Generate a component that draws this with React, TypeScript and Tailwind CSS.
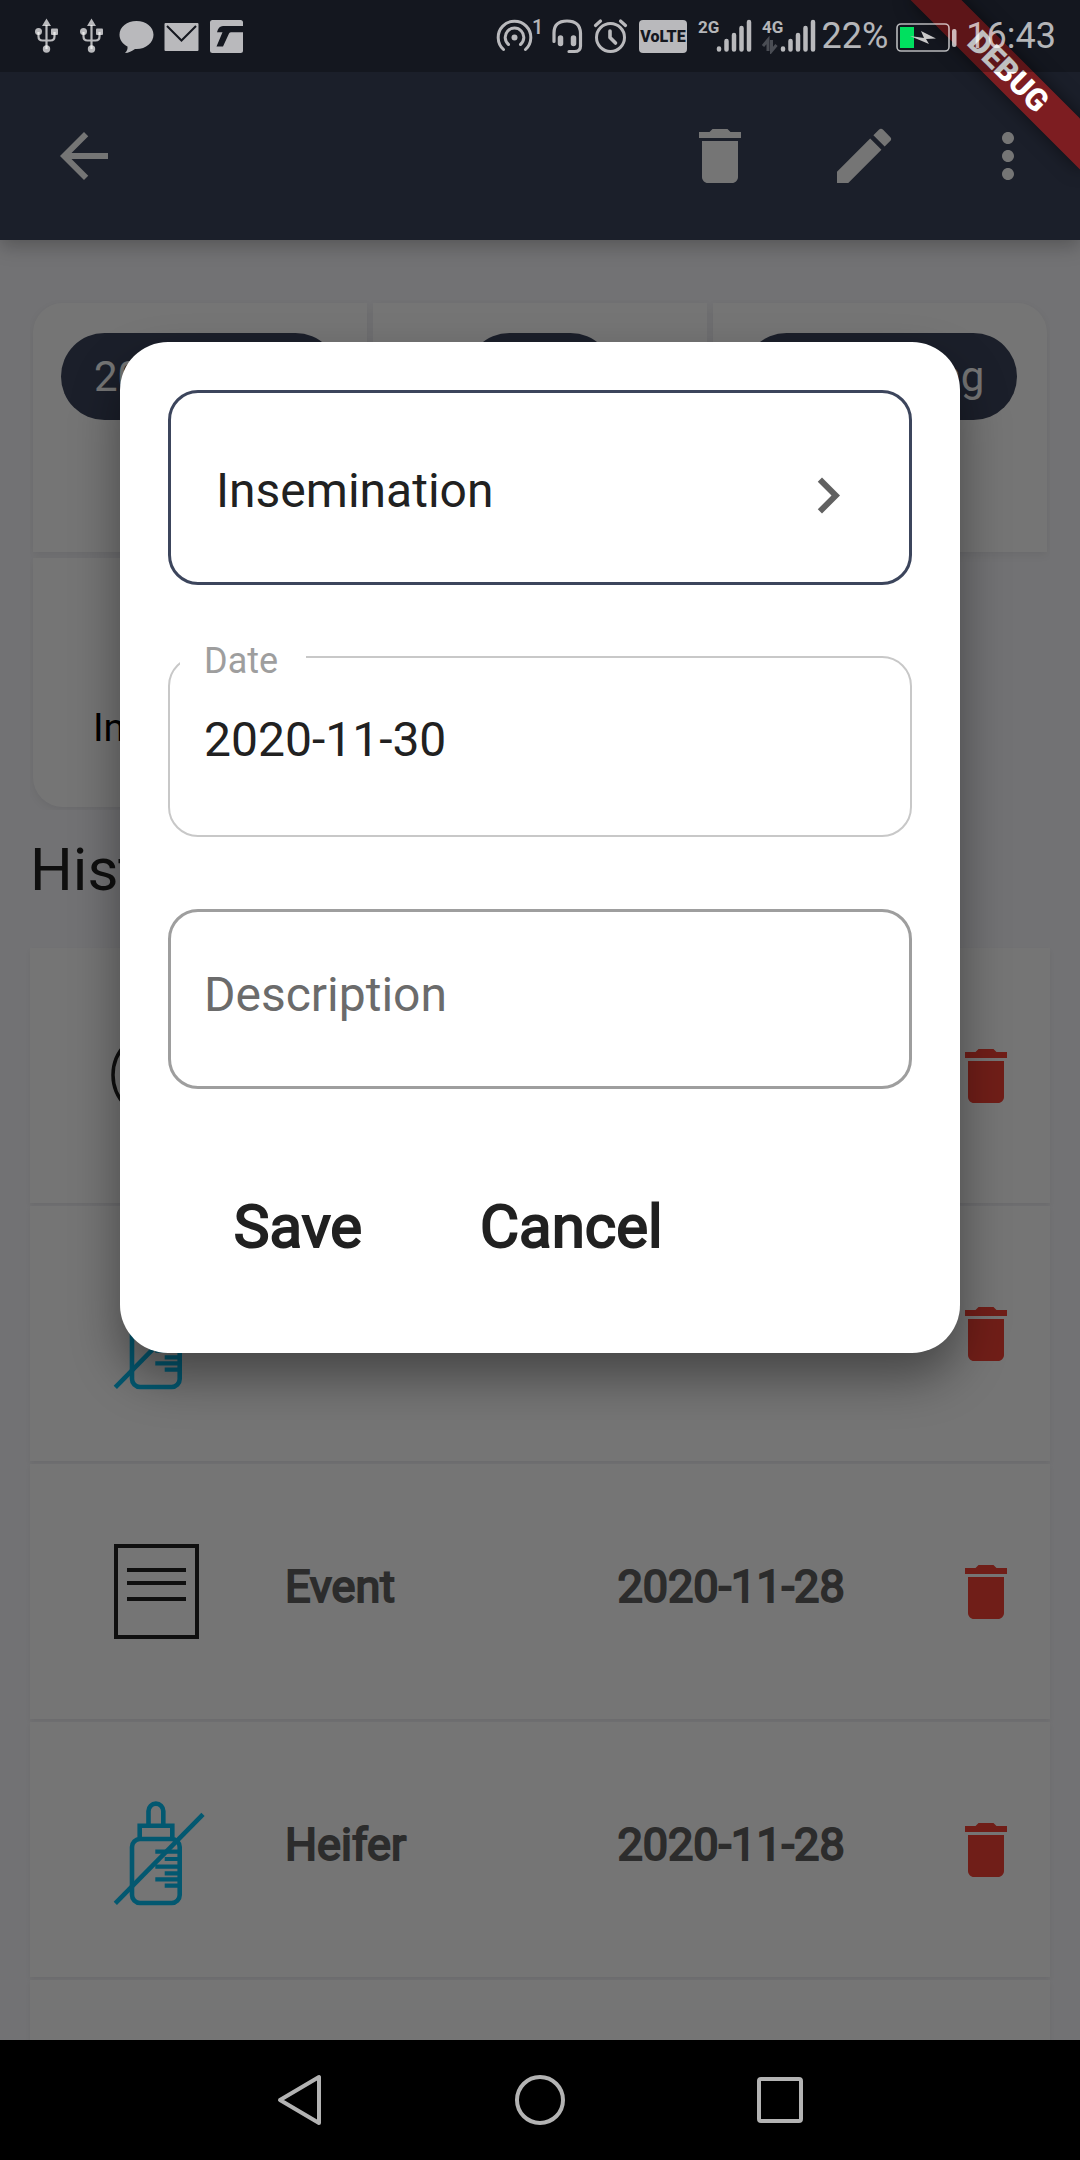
import type { ReactNode } from "react";
import {
  MdArrowBack,
  MdChevronRight,
  MdDelete,
  MdEdit,
  MdMoreVert,
} from "react-icons/md";

/* ---------- Status bar icons ---------- */

function UsbIcon() {
  return (
    <svg width="45" height="36" viewBox="0 0 45 36" fill="none" stroke="currentColor" strokeWidth="2.2">
      <path d="M22.5 7v24M14.5 14v4.500q0 4 4 4h8q4 0 4-4V14" />
      <path d="M22.500 0.500l4.500 7.500h-9z" fill="currentColor" stroke="none" />
      <circle cx="14.500" cy="13.500" r="3.500" fill="currentColor" stroke="none" />
      <rect x="27" y="10.500" width="7" height="6.500" rx="1" fill="currentColor" stroke="none" />
      <circle cx="22.500" cy="31" r="3.700" fill="currentColor" stroke="none" />
    </svg>
  );
}

function ChatIcon() {
  return (
    <svg width="45" height="36" viewBox="0 0 45 36" fill="currentColor">
      <path d="M22.500 3C32 3 39.500 9 39.500 16.700S32 31 22.500 31l-1.500 0C18 33 14.500 35 11 35c2-2 2.800-4 2.500-6.500C8.500 26 5.500 21.500 5.500 16.700 5.500 9 13 3 22.500 3z" />
    </svg>
  );
}

function MailIcon() {
  return (
    <svg width="45" height="36" viewBox="0 0 45 36">
      <rect x="5.500" y="5" width="34" height="28" rx="1" fill="currentColor" />
      <path d="M8 8l14.500 14.500L37 8" fill="none" stroke="#14171f" strokeWidth="2" />
    </svg>
  );
}

function TruecallerIcon() {
  return (
    <svg width="45" height="36" viewBox="0 0 45 36">
      <rect x="6" y="2" width="33" height="33" rx="2.500" fill="currentColor" />
      <path d="M39 8H19q-4.500 0-6 6.200h5.500L12.500 28.500h6.500L25 15.500q.7-1.300 2.200-1.300H39z" fill="#14171f" />
    </svg>
  );
}

function HotspotIcon() {
  return (
    <svg width="48" height="36" viewBox="0 0 48 36" fill="none" stroke="currentColor" strokeWidth="3" strokeLinecap="round">
      <path d="M7.500 31.500A16.300 16.300 0 1 1 29.500 31.500" />
      <path d="M12.500 26.500A9.300 9.300 0 1 1 24.500 26.500" />
      <circle cx="18.500" cy="19.500" r="3" fill="currentColor" stroke="none" />
      <text x="36" y="16" fontSize="20" fontWeight="500" fill="currentColor" stroke="none">1</text>
    </svg>
  );
}

function HeadsetIcon() {
  return (
    <svg width="36" height="36" viewBox="0 0 36 36" fill="none" stroke="currentColor" strokeLinecap="round">
      <path d="M4 23.500V15Q4 3 17 3T30.500 15v13q0 5.500-6 5.500H19" strokeWidth="3.200" />
      <path d="M10.500 20v5.500M23.500 20v5.500" strokeWidth="5.500" />
    </svg>
  );
}

function AlarmIcon() {
  return (
    <svg width="36" height="36" viewBox="0 0 36 36" fill="none" stroke="currentColor" strokeLinecap="round">
      <circle cx="18.500" cy="19.500" r="14" strokeWidth="3" />
      <path d="M3.500 7.500l5-4.500M33.500 7.500l-5-4.500" strokeWidth="3.200" />
      <path d="M18 13v6.500l5.500 5.500" strokeWidth="3.600" strokeLinejoin="round" />
    </svg>
  );
}

function VolteIcon() {
  return (
    <svg width="58" height="36" viewBox="0 0 58 36">
      <rect x="5" y="2" width="48" height="33" rx="4" fill="currentColor" />
      <text x="29" y="24" fontSize="16" fontWeight="900" textAnchor="middle" fill="#14171f">VoLTE</text>
    </svg>
  );
}

function SignalIcon({ label, data = false }: { label: string; data?: boolean }) {
  return (
    <svg width="54" height="36" viewBox="0 0 54 36">
      <text x="0" y="15" fontSize="17" fontWeight="700" fill="currentColor">{label}</text>
      <g stroke="currentColor" strokeWidth="4.500" strokeLinecap="round">
        <path d="M21 30.500v1M28.500 23v8.500M36 17v14.500M43.500 10v21.500M51 4v27.500" />
      </g>
      {data && (
        <path d="M1 28l5-6v11M9.500 22v11l5-6" fill="none" stroke="#4a4d54" strokeWidth="3" />
      )}
    </svg>
  );
}

function BatteryIcon() {
  return (
    <svg width="66" height="36" viewBox="0 0 66 36">
      <rect x="3" y="6" width="52" height="27" rx="4" fill="none" stroke="currentColor" strokeWidth="1.600" />
      <rect x="58" y="11" width="4.500" height="18" rx="2" fill="currentColor" />
      <rect x="6" y="9" width="14" height="21" fill="#00e05f" />
      <path d="M16 18l14 2-3-7 15 7.500-10 .5 3 5z" fill="#c8c8c8" />
    </svg>
  );
}

/* ---------- History icons ---------- */

function InseminationIcon() {
  return (
    <svg width="96" height="111" viewBox="0 0 96 111" fill="none" stroke="#212121" strokeWidth="3.500">
      <circle cx="45" cy="55" r="43" />
    </svg>
  );
}

function EventIcon() {
  return (
    <svg width="96" height="111" viewBox="0 0 96 111" fill="none" stroke="#212121" strokeWidth="4">
      <path d="M5 10h81v91H5zM16 34h59M16 47h59M16 63h59" />
    </svg>
  );
}

function HeiferIcon() {
  return (
    <svg width="96" height="111" viewBox="0 0 96 111" className="overflow-visible" fill="none" stroke="#08bff5" strokeWidth="4.600">
      <path d="M37.500 31V17a7.400 7.400 0 0 1 14.800 0v14" />
      <path d="M28.700 45V31.700h32.600V45" />
      <rect x="21" y="45" width="47.700" height="64" rx="8" />
      <path d="M44.300 57.700h24.400M53.700 65h15M44.300 72.700h24.400M53.700 79.300h15M44.300 85.300h24.400M53.700 91.700h15" strokeWidth="4.200" />
      <path d="M4.300 109.300L92 20.300" />
    </svg>
  );
}

/* ---------- Screen parts ---------- */

function StatusBar() {
  return (
    <div className="absolute inset-x-0 top-0 flex h-18 items-center justify-between bg-black/25 px-6 text-white/70">
      <div className="flex">
        <UsbIcon />
        <UsbIcon />
        <ChatIcon />
        <MailIcon />
        <TruecallerIcon />
      </div>
      <div className="flex items-center gap-1.5 text-[36px] leading-9">
        <HotspotIcon />
        <HeadsetIcon />
        <AlarmIcon />
        <VolteIcon />
        <div className="flex gap-2.5">
          <SignalIcon label="2G" />
          <SignalIcon label="4G" data />
        </div>
        <span>22%</span>
        <BatteryIcon />
        <time>16:43</time>
      </div>
    </div>
  );
}

function IconButton({ label, children }: { label: string; children: ReactNode }) {
  return (
    <button type="button" aria-label={label} className="text-[72px]">
      {children}
    </button>
  );
}

function AppBar() {
  return (
    <header className="relative flex h-60 shrink-0 items-center justify-between bg-[#3c455c] pt-18 pr-9 pl-12 text-white shadow-[0_6px_18px_rgba(0,0,0,0.25)]">
      <IconButton label="Back">
        <MdArrowBack />
      </IconButton>
      <div className="flex gap-18">
        <IconButton label="Delete animal">
          <MdDelete />
        </IconButton>
        <IconButton label="Edit animal">
          <MdEdit />
        </IconButton>
        <IconButton label="More options">
          <MdMoreVert />
        </IconButton>
      </div>
    </header>
  );
}

const cardShadow = "bg-white shadow-[0_3px_9px_rgba(0,0,0,0.07)]";

function Pill({ children }: { children: ReactNode }) {
  return (
    <span className="flex h-[87px] items-center rounded-full bg-[#3c455c] px-[33px] text-[42px] whitespace-nowrap text-white">
      {children}
    </span>
  );
}

function Summary() {
  return (
    <section className="grid auto-rows-[249px] grid-cols-3 gap-[6px] overflow-hidden p-[3px]">
      <div className={`flex items-start justify-center rounded-tl-[30px] pt-[30px] ${cardShadow}`}>
        <Pill>2020-11-28</Pill>
      </div>
      <div className={`flex items-start justify-center pt-[30px] ${cardShadow}`}>
        <Pill>Cow</Pill>
      </div>
      <div className={`flex items-start justify-center rounded-tr-[30px] pt-[30px] ${cardShadow}`}>
        <Pill>Processing</Pill>
      </div>
      <div className={`flex items-end rounded-bl-[30px] pb-[49px] pl-[60px] ${cardShadow}`}>
        <span className="text-[39px] leading-[60px] text-black">Insemination</span>
      </div>
    </section>
  );
}

const history = [
  { name: "Insemination", date: "2020-11-30", icon: <InseminationIcon /> },
  { name: "Heifer", date: "2020-11-28", icon: <HeiferIcon /> },
  { name: "Event", date: "2020-11-28", icon: <EventIcon /> },
  { name: "Heifer", date: "2020-11-28", icon: <HeiferIcon /> },
  { name: "", date: "", icon: null },
];

function History() {
  return (
    <section>
      <h2 className="mt-6 text-[60px] leading-[72px] text-[#212121]">History</h2>
      <ul className="mt-[42px] flex flex-col gap-[3px]">
        {history.map((item, i) => (
          <li
            key={i}
            className="flex h-[255px] items-center bg-white pr-7 text-[45px] text-[#616161] shadow-[0_3px_5px_rgba(0,0,0,0.06)]"
          >
            <div className="w-[255px] pl-[81px]">{item.icon}</div>
            <span className="flex-1 pb-2.5 [-webkit-text-stroke:2px]">{item.name}</span>
            <span className="flex-1 pb-2.5 [-webkit-text-stroke:2px]">{item.date}</span>
            <button type="button" aria-label="Delete entry" className="text-[72px] text-[#f44336]">
              <MdDelete />
            </button>
          </li>
        ))}
      </ul>
    </section>
  );
}

function EventDialog() {
  return (
    <form
      role="dialog"
      aria-label="Edit event"
      className="flex w-full flex-col rounded-[48px] bg-white p-12 text-[48px] text-[#212121] shadow-[0_24px_48px_rgba(0,0,0,0.4)]"
    >
      <div className="relative">
        <select
          aria-label="Event type"
          defaultValue="Insemination"
          className="h-[195px] w-full appearance-none rounded-[30px] border-3 border-[#3c455c] bg-white pt-1.5 pl-[45px]"
        >
          <option>Insemination</option>
        </select>
        <MdChevronRight className="pointer-events-none absolute inset-y-0 right-12 mt-2 h-full text-[72px] text-[#616161]" />
      </div>

      <fieldset className="mt-[47px] h-[205px] rounded-[30px] border-2 border-[#c8c8c8]">
        <legend className="ml-[10px] pt-2 pr-7 pl-6 text-[36px] leading-[42px] text-[#9e9e9e]">
          <label htmlFor="date">Date</label>
        </legend>
        <input
          id="date"
          defaultValue="2020-11-30"
          className="mt-7 w-full bg-transparent px-[34px] leading-[60px] outline-none"
        />
      </fieldset>

      <input
        aria-label="Description"
        placeholder="Description"
        className="mt-18 h-[180px] w-full rounded-[30px] border-3 border-[#9e9e9e] px-[33px] pb-2.5 outline-none placeholder:text-[#6b6b6b]"
      />

      <div className="mt-15 flex h-[156px] items-center gap-1 text-[60px]">
        <button type="button" className="min-w-[260px] px-12 [-webkit-text-stroke:2px]">
          Save
        </button>
        <button type="button" className="min-w-[260px] px-12 [-webkit-text-stroke:2px]">
          Cancel
        </button>
      </div>
    </form>
  );
}

function DebugBanner() {
  return (
    <div className="pointer-events-none absolute top-0 right-0 flex size-36 items-center justify-center">
      <div className="w-60 shrink-0 rotate-45 bg-[#b71c1ca0] text-center text-[31px] leading-9 font-black text-white shadow-[0_0_18px_rgba(0,0,0,0.5)]">
        DEBUG
      </div>
    </div>
  );
}

function NavigationBar() {
  return (
    <nav className="flex h-30 shrink-0 justify-center bg-black text-[#b3b3b3]">
      <button type="button" aria-label="Back" className="flex w-60 items-center justify-center">
        <svg width="48" height="54" viewBox="0 0 48 54" fill="none" stroke="currentColor" strokeWidth="4" strokeLinejoin="round">
          <path d="M43 4v46L4 27z" />
        </svg>
      </button>
      <button type="button" aria-label="Home" className="flex w-60 items-center justify-center">
        <svg width="54" height="54" viewBox="0 0 54 54" fill="none" stroke="currentColor" strokeWidth="4">
          <circle cx="27" cy="27" r="23" />
        </svg>
      </button>
      <button type="button" aria-label="Recent apps" className="flex w-60 items-center justify-center">
        <svg width="54" height="54" viewBox="0 0 54 54" fill="none" stroke="currentColor" strokeWidth="4">
          <rect x="6" y="6" width="42" height="42" rx="2" />
        </svg>
      </button>
    </nav>
  );
}

export default function App() {
  return (
    <div className="flex h-screen flex-col overflow-hidden font-['Roboto',sans-serif]">
      <div className="relative flex min-h-0 flex-1 flex-col overflow-hidden bg-[#f8f8fc]">
        <AppBar />
        <main className="px-[30px] pt-15">
          <Summary />
          <History />
        </main>
        <div className="absolute inset-0 flex items-start bg-black/54 px-30 pt-[342px]">
          <EventDialog />
        </div>
        <DebugBanner />
        <StatusBar />
      </div>
      <NavigationBar />
    </div>
  );
}
